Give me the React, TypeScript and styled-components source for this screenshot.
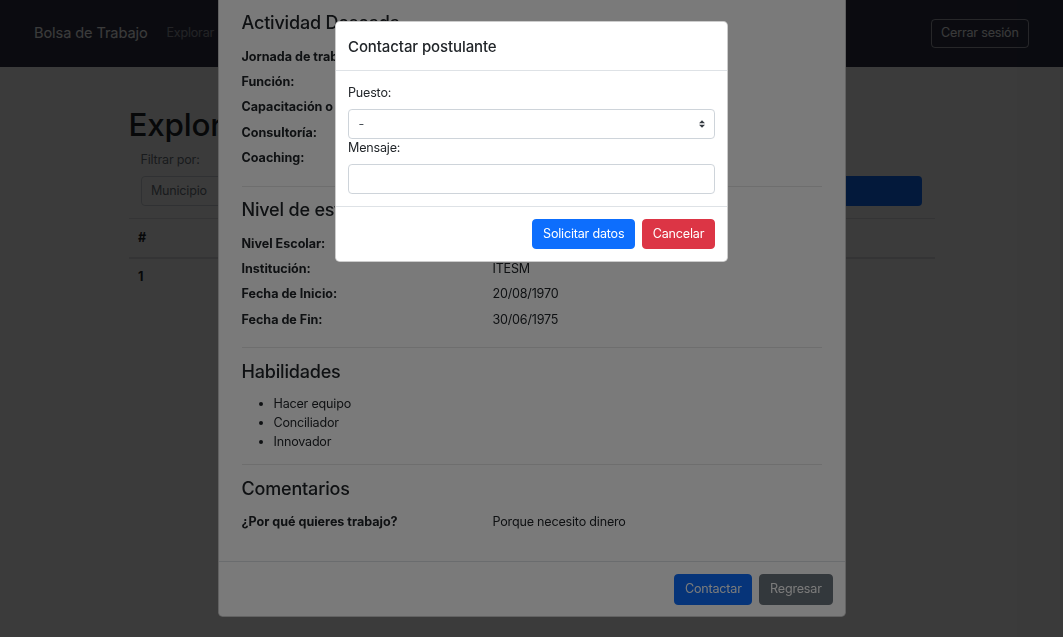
import React from "react";
import styled, { createGlobalStyle } from "styled-components";

const GlobalStyle = createGlobalStyle`
  html, body { margin: 0; padding: 0; height: 100%; overflow: hidden; background: #ffffff; }
  body {
    font-family: Inter, "Helvetica Neue", Arial, sans-serif;
    font-size: 12.56px;
    line-height: 1.5;
    letter-spacing: -0.015em;
    color: #212529;
  }
  *, *::before, *::after { box-sizing: border-box; }
`;

/* ---------- page behind the modals ---------- */

const Navbar = styled.nav`
  height: 67px;
  background: #2f3348;
  display: flex;
  align-items: center;
  padding: 0 34px;
`;

const Brand = styled.span`
  font-size: 14.6px;
  letter-spacing: -0.1px;
  color: #ffffff;
  margin-right: 12.5px;
`;

const NavLink = styled.span`
  padding: 0 6.3px;
  color: rgba(255, 255, 255, 0.5);
`;

const OutlineButton = styled.button`
  margin-left: auto;
  font: inherit;
  letter-spacing: inherit;
  color: #f8f9fa;
  background: transparent;
  border: 1px solid rgba(248, 249, 250, 0.6);
  border-radius: 3.9px;
  padding: 4.1px 9.4px;
  line-height: 1.5;
`;

const Container = styled.main`
  width: 806px;
  margin: 0 auto;
  padding-top: 40px;
`;

const PageTitle = styled.h1`
  font-size: 31.4px;
  font-weight: 500;
  line-height: 1.2;
  margin: 0 0 6.3px;
`;

const FilterBlock = styled.div`
  padding: 0 13px 0 12px;
  margin-bottom: 12.5px;
`;

const MutedLabel = styled.div`
  color: #6c757d;
  margin-bottom: 6.3px;
`;

const FilterRow = styled.div`
  display: grid;
  grid-template-columns: 220px 220px 1fr;
  gap: 12px;
`;

const FakeSelect = styled.div`
  height: 29.8px;
  border: 1px solid #ced4da;
  border-radius: 3.9px;
  padding: 4.7px 9.4px;
  color: #6c757d;
  background: #fff;
`;

const PrimaryBlock = styled.div`
  height: 29.8px;
  border-radius: 3.9px;
  background: #0d6efd;
  color: #fff;
  display: flex;
  align-items: center;
  padding-left: 60px;
`;

const Table = styled.table`
  width: 100%;
  border-collapse: collapse;
  table-layout: fixed;
`;

const Th = styled.th`
  text-align: left;
  font-weight: 700;
  padding: 9.4px;
  border-top: 1px solid #dee2e6;
  border-bottom: 2px solid #dee2e6;
`;

const Td = styled.td<{ $bold?: boolean }>`
  padding: 9.4px;
  border-top: 1px solid #dee2e6;
  font-weight: ${(p) => (p.$bold ? 700 : 400)};
`;

/* ---------- overlays ---------- */

const Backdrop = styled.div<{ $z: number }>`
  position: fixed;
  inset: 0;
  background: rgba(0, 0, 0, 0.52);
  z-index: ${(p) => p.$z};
`;

const ModalLayer = styled.div<{ $z: number; $anchor: "top" | "bottom" }>`
  position: fixed;
  inset: 0;
  z-index: ${(p) => p.$z};
  display: flex;
  flex-direction: column;
  align-items: center;
  overflow: hidden;
  justify-content: ${(p) => (p.$anchor === "bottom" ? "flex-end" : "flex-start")};
  padding: ${(p) => (p.$anchor === "bottom" ? "0 0 20px" : "21px 0 0")};
`;

const ModalContent = styled.div<{ $width: number }>`
  width: ${(p) => p.$width}px;
  flex-shrink: 0;
  background: #ffffff;
  border: 1px solid rgba(0, 0, 0, 0.2);
  border-radius: 4.7px;
  display: flex;
  flex-direction: column;
`;

const DetailBody = styled.div`
  display: flex;
  flex-direction: column;
  padding: 12.5px 23px 24px;
`;

const SectionTitle = styled.h4`
  font-size: 18px;
  font-weight: 500;
  letter-spacing: -0.01em;
  line-height: 1.25;
  margin: 0 0 12px;
`;

const InfoRow = styled.div`
  display: grid;
  grid-template-columns: 251px 1fr;
  line-height: 19px;
  margin-bottom: 6.3px;
  white-space: nowrap;
`;

const InfoLabel = styled.span`
  font-weight: 700;
  letter-spacing: 0;
`;

const Divider = styled.hr`
  align-self: stretch;
  border: 0;
  border-top: 1px solid rgba(0, 0, 0, 0.1);
  margin: 12.5px 0;
`;

const SkillList = styled.ul`
  margin: 0;
  padding-left: 32px;
  line-height: 18.7px;
`;

const ModalHeader = styled.div`
  padding: 12.5px 12px;
  border-bottom: 1px solid #dee2e6;
`;

const ModalTitle = styled.h5`
  margin: 0;
  font-size: 15px;
  font-weight: 500;
  letter-spacing: -0.1px;
  line-height: 1.55;
`;

const FormBody = styled.div`
  padding: 12.5px 12px;
`;

const FieldLabel = styled.label`
  display: block;
  margin-bottom: 6.3px;
`;

const SelectWrap = styled.div`
  position: relative;
`;

const Select = styled.select`
  display: block;
  width: 100%;
  height: 29.8px;
  appearance: none;
  -webkit-appearance: none;
  font: inherit;
  color: #495057;
  background: #fff;
  border: 1px solid #ced4da;
  border-radius: 3.9px;
  padding: 4.7px 24px 4.7px 9.4px;
  line-height: 1.5;
`;

const SelectArrow = styled.svg`
  position: absolute;
  right: 10px;
  top: 50%;
  transform: translateY(-50%);
  pointer-events: none;
`;

const Input = styled.input`
  display: block;
  width: 100%;
  height: 29.8px;
  font: inherit;
  color: #495057;
  background: #fff;
  border: 1px solid #ced4da;
  border-radius: 3.9px;
  padding: 4.7px 9.4px;
`;

const ModalFooter = styled.div`
  display: flex;
  justify-content: flex-end;
  gap: 6.8px;
  padding: 12px 12px 11.5px;
  border-top: 1px solid #dee2e6;
`;

const variants = {
  primary: { bg: "#0d6efd", border: "#0d6efd" },
  danger: { bg: "#dc3545", border: "#dc3545" },
  secondary: { bg: "#6c757d", border: "#6c757d" },
};

const Button = styled.button<{ $variant: keyof typeof variants }>`
  font: inherit;
  letter-spacing: inherit;
  line-height: 18.8px;
  color: #ffffff;
  background: ${(p) => variants[p.$variant].bg};
  border: 1px solid ${(p) => variants[p.$variant].border};
  border-radius: 3.9px;
  padding: 4.7px 9.8px;
`;

/* ---------- data ---------- */

type Row = [string, string];

const sections: { title: string; rows?: Row[]; list?: string[] }[] = [
  {
    title: "Datos Personales",
    rows: [
      ["Nombre:", "Juan Pérez López"],
      ["Correo:", "juan.perez@correo.com"],
      ["Teléfono:", "81 1234 5678"],
      ["Municipio:", "Monterrey"],
    ],
  },
  {
    title: "Actividad Deseada",
    rows: [
      ["Jornada de trabajo:", "Tiempo completo"],
      ["Función:", "Administración"],
      ["Capacitación o Asesoría:", "Sí"],
      ["Consultoría:", "Sí"],
      ["Coaching:", "No"],
    ],
  },
  {
    title: "Nivel de estudios",
    rows: [
      ["Nivel Escolar:", "Licenciatura"],
      ["Institución:", "ITESM"],
      ["Fecha de Inicio:", "20/08/1970"],
      ["Fecha de Fin:", "30/06/1975"],
    ],
  },
  { title: "Habilidades", list: ["Hacer equipo", "Conciliador", "Innovador"] },
  {
    title: "Comentarios",
    rows: [["¿Por qué quieres trabajo?", "Porque necesito dinero"]],
  },
];

export default function App() {
  return (
    <>
      <GlobalStyle />
      <Navbar>
        <Brand>Bolsa de Trabajo</Brand>
        <NavLink>Explorar</NavLink>
        <OutlineButton>Cerrar sesión</OutlineButton>
      </Navbar>
      <Container>
        <PageTitle>Explorar postulantes</PageTitle>
        <FilterBlock>
          <MutedLabel>Filtrar por:</MutedLabel>
          <FilterRow>
            <FakeSelect>Municipio</FakeSelect>
            <FakeSelect>Nivel Escolar</FakeSelect>
            <PrimaryBlock>Filtrar</PrimaryBlock>
          </FilterRow>
        </FilterBlock>
        <Table>
          <colgroup>
            <col style={{ width: "80px" }} />
            <col style={{ width: "260px" }} />
            <col style={{ width: "220px" }} />
            <col />
          </colgroup>
          <thead>
            <tr>
              <Th>#</Th>
              <Th>Nombre</Th>
              <Th>Municipio</Th>
              <Th>Nivel</Th>
            </tr>
          </thead>
          <tbody>
            <tr>
              <Td $bold>1</Td>
              <Td>Juan Pérez</Td>
              <Td>Monterrey</Td>
              <Td>Lic.</Td>
            </tr>
          </tbody>
        </Table>
      </Container>

      <Backdrop $z={10} />
      <ModalLayer $z={20} $anchor="bottom">
        <ModalContent $width={628}>
          <DetailBody>
            {sections.map((s, i) => (
              <React.Fragment key={s.title}>
                {i > 0 && <Divider />}
                <SectionTitle>{s.title}</SectionTitle>
                {s.rows?.map(([k, v]) => (
                  <InfoRow key={k}>
                    <InfoLabel>{k}</InfoLabel>
                    <span>{v}</span>
                  </InfoRow>
                ))}
                {s.list && (
                  <SkillList>
                    {s.list.map((item) => (
                      <li key={item}>{item}</li>
                    ))}
                  </SkillList>
                )}
              </React.Fragment>
            ))}
          </DetailBody>
          <ModalFooter>
            <Button $variant="primary">Contactar</Button>
            <Button $variant="secondary">Regresar</Button>
          </ModalFooter>
        </ModalContent>
      </ModalLayer>

      <Backdrop $z={30} />
      <ModalLayer $z={40} $anchor="top">
        <ModalContent $width={393}>
          <ModalHeader>
            <ModalTitle>Contactar postulante</ModalTitle>
          </ModalHeader>
          <FormBody>
            <FieldLabel>Puesto:</FieldLabel>
            <SelectWrap>
              <Select defaultValue="-">
                <option value="-">-</option>
              </Select>
              <SelectArrow width="6" height="8" viewBox="0 0 4 5">
                <path d="M2 0L0 2h4zm0 5L0 3h4z" fill="#343a40" />
              </SelectArrow>
            </SelectWrap>
            <FieldLabel>Mensaje:</FieldLabel>
            <Input type="text" />
          </FormBody>
          <ModalFooter>
            <Button $variant="primary">Solicitar datos</Button>
            <Button $variant="danger">Cancelar</Button>
          </ModalFooter>
        </ModalContent>
      </ModalLayer>
    </>
  );
}
